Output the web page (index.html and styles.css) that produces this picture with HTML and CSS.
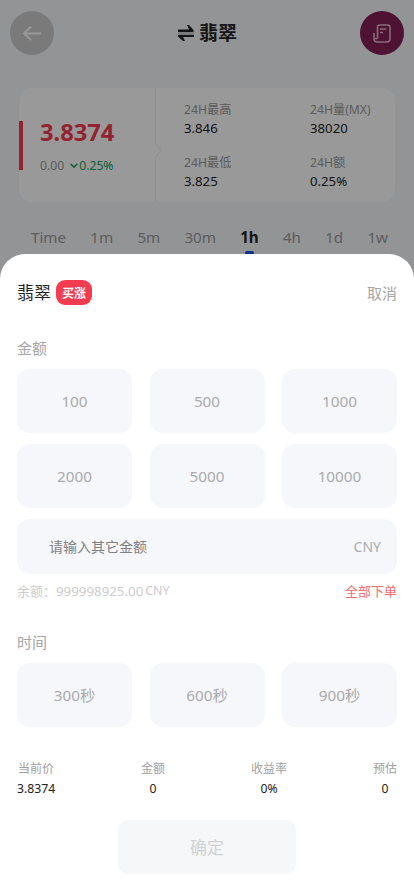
FILE: index.html
```html
<!DOCTYPE html>
<html lang="zh-CN">
<head>
<meta charset="UTF-8">
<meta name="viewport" content="width=device-width, initial-scale=1">
<title>翡翠</title>
<link rel="stylesheet" href="styles.css">
</head>
<body>
<main class="page">
  <header class="header">
    <div class="round back">
      <svg width="20" height="16" viewBox="0 0 20 16" fill="none" stroke="currentColor" stroke-width="1.8"><path d="M19 8.500H2M9 1.500L2 8.500L9 15"/></svg>
    </div>
    <div class="title">
      <svg width="16" height="16" viewBox="0 0 16 16" fill="currentColor"><path d="M0 4.500H11L9 0H11L15.500 5V7H0ZM0 10H16V12H5L7 16H5L0 11.500Z"/><path d="M0 7H16V10H0Z" opacity=".2"/></svg>
      <h1>翡翠</h1>
    </div>
    <div class="round orders">
      <svg width="18" height="19" viewBox="0 0 18 19" fill="none" stroke="currentColor" stroke-width="1.6"><path d="M4.500 14.500V3Q4.500 1 6.500 1H14.500Q17 1 17 3.500V14.500Q17 18 13.500 18H4.500Q1 18 1 14.500V9M1 14.500H4.500M7 5H13.500M7 8.500H10"/></svg>
    </div>
  </header>

  <section class="quote">
    <div class="price">
      <strong>3.8374</strong>
      <p><span>0.00</span><span class="down"><svg width="8" height="6" viewBox="0 0 8 6" fill="none" stroke="currentColor" stroke-width="1.6"><path d="M.7 1L4 4.2L7.3 1"/></svg>0.25%</span></p>
    </div>
    <svg class="divider" width="8" height="114" viewBox="0 0 8 114" fill="none" stroke="currentColor"><path d="M.5 0V56L6 62.500L.5 69V114"/></svg>
    <dl class="figures">
      <div><dt>24H最高</dt><dd>3.846</dd></div>
      <div><dt>24H量(MX)</dt><dd>38020</dd></div>
      <div><dt>24H最低</dt><dd>3.825</dd></div>
      <div><dt>24H额</dt><dd>0.25%</dd></div>
    </dl>
  </section>

  <nav class="tabs">
    <span>Time</span><span>1m</span><span>5m</span><span>30m</span><span class="active">1h</span><span>4h</span><span>1d</span><span>1w</span>
  </nav>
</main>

<div class="overlay"></div>

<section class="sheet">
  <div class="sheet-head">
    <h2>翡翠</h2><span class="badge">买涨</span><span class="cancel">取消</span>
  </div>
  <h3>金额</h3>
  <div class="options">
    <div class="option">100</div><div class="option">500</div><div class="option">1000</div>
    <div class="option">2000</div><div class="option">5000</div><div class="option">10000</div>
  </div>
  <div class="field"><input type="text" placeholder="请输入其它金额"><span>CNY</span></div>
  <div class="balance"><span>余额：</span><span class="amount">999998925.00</span><small>CNY</small><span class="all">全部下单</span></div>
  <h3 class="time-label">时间</h3>
  <div class="options">
    <div class="option">300秒</div><div class="option">600秒</div><div class="option">900秒</div>
  </div>
  <dl class="summary">
    <div><dt>当前价</dt><dd>3.8374</dd></div>
    <div><dt>金额</dt><dd>0</dd></div>
    <div><dt>收益率</dt><dd>0%</dd></div>
    <div><dt>预估</dt><dd>0</dd></div>
  </dl>
  <div class="confirm">确定</div>
</section>
</body>
</html>
```

FILE: styles.css
```css
* { box-sizing: border-box; margin: 0; padding: 0; }
html, body { height: 100%; overflow: hidden; }
body {
  font-family: "Noto Sans", "Noto Sans CJK SC", sans-serif;
  background: #f6f7fb;
  color: #222;
}
svg { display: block; flex: none; }

.page { height: 100%; }
.header {
  display: flex;
  align-items: center;
  justify-content: space-between;
  padding: 11px 10px 0;
}
.round {
  display: flex;
  align-items: center;
  justify-content: center;
  width: 44px;
  height: 44px;
  border-radius: 50%;
  color: #fff;
}
.back { background: #ccc; }
.orders { background: #841e55; color: #e0b4cb; }
.title { display: flex; align-items: center; gap: 5px; padding-left: 1px; }
.title h1 { font-size: 19px; line-height: 24px; font-weight: 700; }

.quote {
  display: flex;
  width: 376px;
  height: 114px;
  margin: 33px 0 0 19px;
  border-radius: 13px;
  background: #fff;
}
.price {
  width: 136px;
  height: 49px;
  margin-top: 33px;
  padding-left: 17px;
  border-left: 4px solid #f53b50;
}
.price strong { display: block; font-size: 23.7px; line-height: 23px; color: #f53b50; }
.price p {
  display: flex;
  gap: 6px;
  margin-top: 14px;
  font-size: 12.2px;
  line-height: 16px;
  color: #999;
}
.down { display: flex; align-items: center; gap: 1px; color: #14a15c; }
.divider { color: #eeeff2; }
.figures {
  display: grid;
  grid-template-columns: 126px auto;
  grid-auto-rows: 53px;
  padding: 13px 0 0 21px;
}
.figures dt { font-size: 12.2px; line-height: 17px; color: #999; }
.figures dd { font-size: 13.2px; line-height: 20px; }

.tabs {
  display: flex;
  justify-content: space-between;
  margin: 23px 26px 0 31px;
  font-size: 15.2px;
  line-height: 24px;
  color: #999;
}
.active { color: #222; font-weight: 700; }
.active::after {
  content: "";
  display: block;
  width: 9px;
  height: 4px;
  margin: 2px auto 0;
  border-radius: 2px;
  background: #1358dc;
}

.overlay { position: fixed; inset: 0; background: rgba(0, 0, 0, .4); }
.sheet {
  position: fixed;
  inset: 254px 0 0;
  padding: 26px 17px 0;
  border-radius: 25px 25px 0 0;
  background: #fff;
}
.sheet-head { display: flex; align-items: center; height: 25px; }
.sheet-head h2 { font-size: 17px; line-height: 24px; font-weight: 400; }
.badge {
  width: 36px;
  height: 25px;
  margin-left: 5px;
  border-radius: 9px;
  background: #f53b50;
  color: #fff;
  font-size: 12px;
  line-height: 27px;
  font-weight: 700;
  text-align: center;
}
.cancel { margin-left: auto; font-size: 15px; color: #a6a6a6; }
.sheet h3 {
  margin: 31px 0 9px;
  font-size: 15px;
  line-height: 24px;
  font-weight: 400;
  color: #a6a6a6;
}
.options { display: grid; grid-template-columns: repeat(3, 115px); justify-content: space-between; row-gap: 11px; }
.option {
  height: 64px;
  border-radius: 13px;
  background: #f6f7fb;
  color: #aaa;
  font-size: 15.3px;
  line-height: 64px;
  text-align: center;
}
.field {
  display: flex;
  align-items: center;
  height: 55px;
  margin-top: 11px;
  padding: 0 16px 0 32px;
  border-radius: 13px;
  background: #f6f7fb;
  font-size: 14px;
  color: #aaa;
}
.field input {
  flex: 1;
  min-width: 0;
  border: 0;
  outline: 0;
  background: none;
  font: inherit;
}
.field input::placeholder { color: #808080; }
.balance {
  display: flex;
  align-items: center;
  height: 20px;
  margin-top: 7px;
  font-size: 13px;
  line-height: 20px;
  color: #ccc;
}
.amount { font-size: 13.3px; }
.balance small { margin-left: 2px; font-size: 12.4px; }
.all { margin-left: auto; color: #fa6b6b; }
.sheet .time-label { margin-top: 29px; }
.summary { display: flex; justify-content: space-between; margin-top: 32px; text-align: center; }
.summary dt { font-size: 12px; line-height: 20px; color: #a0a0a0; }
.summary dd { font-size: 12.2px; line-height: 20px; }
.confirm {
  width: 178px;
  height: 54px;
  margin: 21px auto 0;
  border-radius: 10px;
  background: #f5f7f9;
  color: #d2d2d2;
  font-size: 17px;
  line-height: 55px;
  text-align: center;
}
```
